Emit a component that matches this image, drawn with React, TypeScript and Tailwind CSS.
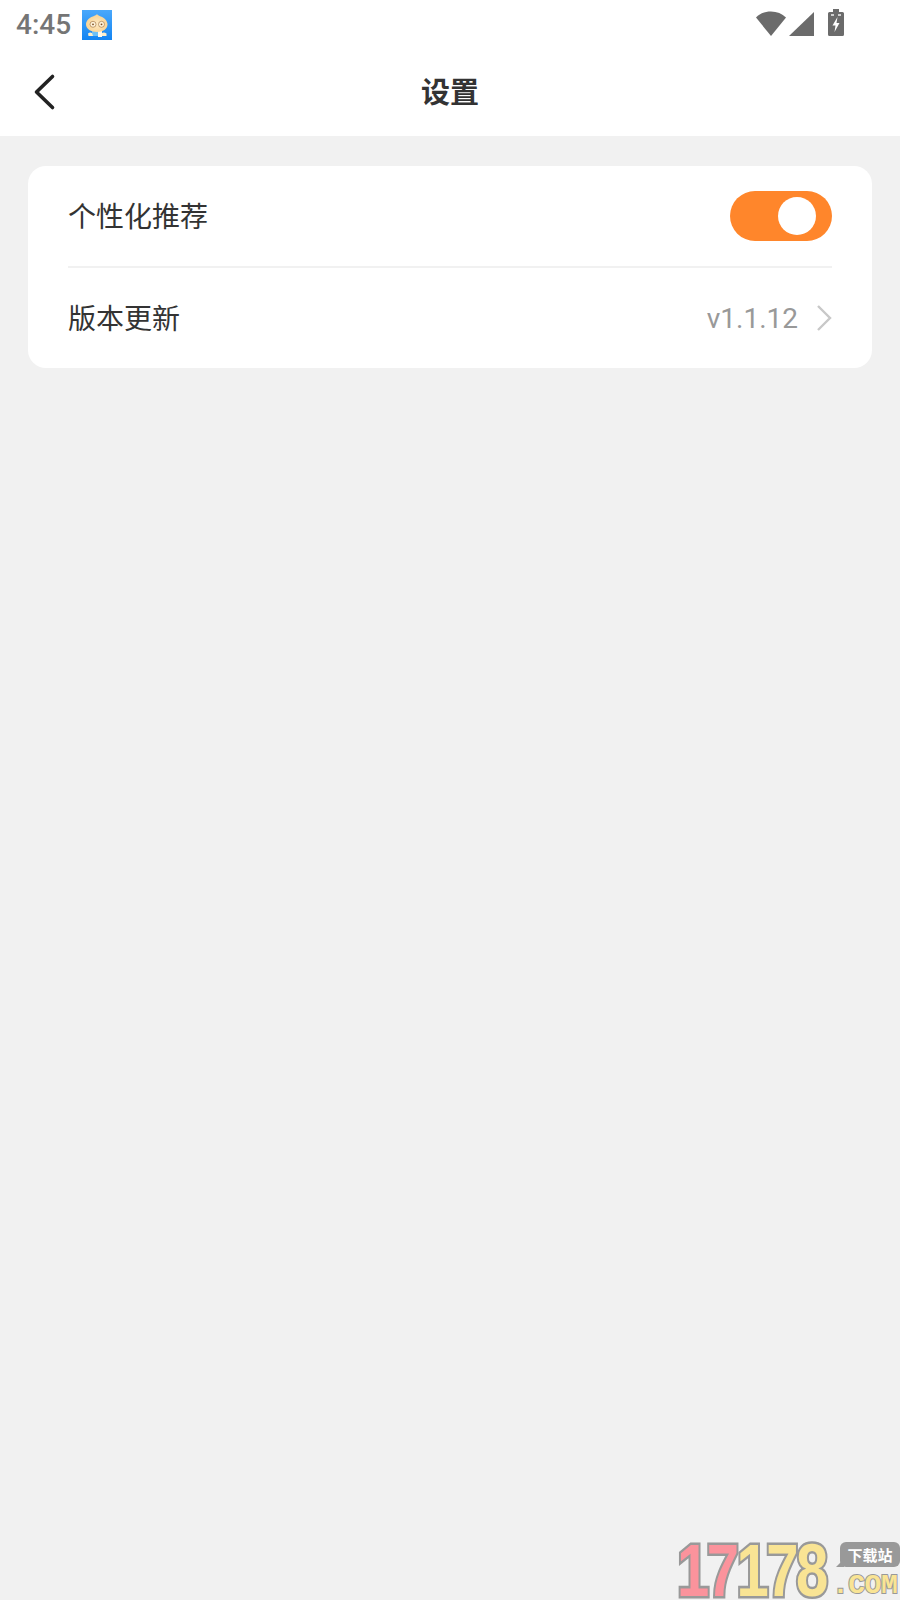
const FONT = "font-['Roboto','Noto_Sans_CJK_SC',sans-serif]";

function AppIcon() {
  return (
    <svg width="30" height="30" viewBox="0 0 30 30">
      <defs>
        <linearGradient id="sky" x1="0" y1="0" x2="0" y2="1">
          <stop offset="0" stopColor="#4aa8fb" />
          <stop offset="1" stopColor="#1284f2" />
        </linearGradient>
        <radialGradient id="bun" cx="0.5" cy="0.55" r="0.6">
          <stop offset="0" stopColor="#fdeac4" />
          <stop offset="1" stopColor="#f9d08c" />
        </radialGradient>
      </defs>
      <rect width="30" height="30" fill="url(#sky)" />
      <rect x="10" y="21" width="6" height="5" fill="#6cc0f7" />
      <rect x="16" y="20" width="4" height="7" fill="#fdf8ea" />
      <path d="M6 23.500q2-1.500 4-.5l1 3H6.500z" fill="#fdeecb" />
      <path d="M20 23q2-1 4.500.5v2.500H20z" fill="#fdeecb" />
      <path d="M15 4c.8 1.500 2.500 1.800 4.500 2.800 3 1.500 6 4 6 7.700 0 4.500-4.500 7.500-10.500 7.500S4 19 4 14.500c0-3.700 3-6.200 6-7.700C12 5.800 14.200 5.500 15 4z" fill="url(#bun)" />
      <circle cx="11" cy="14.300" r="3" fill="#fef3d9" stroke="#9a6a35" strokeWidth="0.6" />
      <circle cx="19.500" cy="14.300" r="3" fill="#fef3d9" stroke="#9a6a35" strokeWidth="0.6" />
      <circle cx="11" cy="14.300" r="0.9" fill="#7a4a20" />
      <circle cx="19.500" cy="14.300" r="0.9" fill="#7a4a20" />
    </svg>
  );
}

function StatusIcons() {
  return (
    <div className="flex items-end h-[27px] mt-[-10px]">
      <svg width="30" height="25" viewBox="0 0 30 25">
        <path d="M0 6.500C4 2.500 9 .5 15 .5S26 2.500 30 6.500L15 25z" fill="#6b6b6b" />
      </svg>
      <svg width="25" height="24" viewBox="0 0 25 24" className="ml-[3px]">
        <path d="M0 24 25 0v24z" fill="#6b6b6b" />
      </svg>
      <svg width="16" height="27" viewBox="0 0 16 27" className="ml-[14px]">
        <path d="M5 0h6v3h3.500A1.500 1.500 0 0 1 16 4.500v21a1.500 1.500 0 0 1-1.500 1.500h-13A1.500 1.500 0 0 1 0 25.500v-21A1.500 1.500 0 0 1 1.500 3H5z" fill="#6b6b6b" />
        <rect x="3" y="5" width="3" height="2" fill="#cfcfcf" />
        <rect x="10" y="5" width="3" height="2" fill="#cfcfcf" />
        <path d="M9.500 8 4.500 16.500h3L6.500 23l5-9h-3z" fill="#ffffff" />
      </svg>
    </div>
  );
}

function Watermark() {
  return (
    <div className="absolute right-0 bottom-0 w-[223px] h-[60px] font-['Liberation_Sans',sans-serif]">
      <div className="absolute left-0 top-[7px] flex origin-center scale-y-[1.28] font-bold text-[58px] leading-[46px] tracking-[-2.500px] [-webkit-text-stroke:4px_#999999] [paint-order:stroke_fill]">
        <span className="text-[#fb939c]">17</span>
        <span className="text-[#f9e494]">178</span>
      </div>
      <div className="absolute left-[163px] top-[2px] w-[60px] h-[25px] rounded-[6px] bg-[#999999] text-white text-[15px] leading-[25px] text-center font-['Noto_Sans_CJK_SC',sans-serif] font-bold">
        下载站
        <span className="absolute left-[-4px] bottom-0 w-0 h-0 border-t-[8px] border-t-transparent border-r-[8px] border-r-[#999999]" />
      </div>
      <div className="absolute left-[155px] top-[32px] text-[#f9e494] text-[28px] leading-[28px] font-bold font-['Liberation_Mono',monospace] tracking-[-0.500px] [-webkit-text-stroke:2px_#999999] [paint-order:stroke_fill]">
        .COM
      </div>
    </div>
  );
}

export default function App() {
  return (
    <div className={`relative min-h-[1600px] w-full bg-[#f1f1f1] ${FONT}`}>
      <div className="h-[55px] bg-white flex items-center justify-between pl-4 pr-[56px]">
        <div className="flex items-center gap-[11px] -mt-[5px]">
          <span className="text-[28px] font-medium text-[#757575] leading-none">4:45</span>
          <AppIcon />
        </div>
        <StatusIcons />
      </div>

      <div className="relative h-[81px] bg-white flex items-center justify-center">
        <svg width="24" height="38" viewBox="0 0 24 38" className="absolute left-[32px] top-[18px]">
          <path d="M20.500 3.500 4.500 19l16 15.500" fill="none" stroke="#222222" strokeWidth="3.600" strokeLinecap="round" strokeLinejoin="round" />
        </svg>
        <h1 className="text-[29px] font-bold text-[#333333] leading-none -mt-[4px]">设置</h1>
      </div>

      <div className="mx-[28px] mt-[30px] bg-white rounded-[18px] px-10">
        <div className="h-[102px] flex items-center justify-between border-b-2 border-[#f1f1f1]">
          <span className="text-[28px] text-[#333333] pt-[3px]">个性化推荐</span>
          <button className="w-[102px] h-[50px] rounded-full bg-[#ff862b] flex items-center justify-end pr-4">
            <span className="w-[38px] h-[38px] rounded-full bg-white" />
          </button>
        </div>
        <div className="h-[100px] flex items-center justify-between">
          <span className="text-[28px] text-[#333333] pt-[3px]">版本更新</span>
          <div className="flex items-center">
            <span className="text-[28px] text-[#999999] pt-[1px]">v1.1.12</span>
            <svg width="16" height="28" viewBox="0 0 16 28" className="ml-[18px]">
              <path d="M2 2l12 12L2 26" fill="none" stroke="#c8c8c8" strokeWidth="2.400" />
            </svg>
          </div>
        </div>
      </div>

      <Watermark />
    </div>
  );
}
